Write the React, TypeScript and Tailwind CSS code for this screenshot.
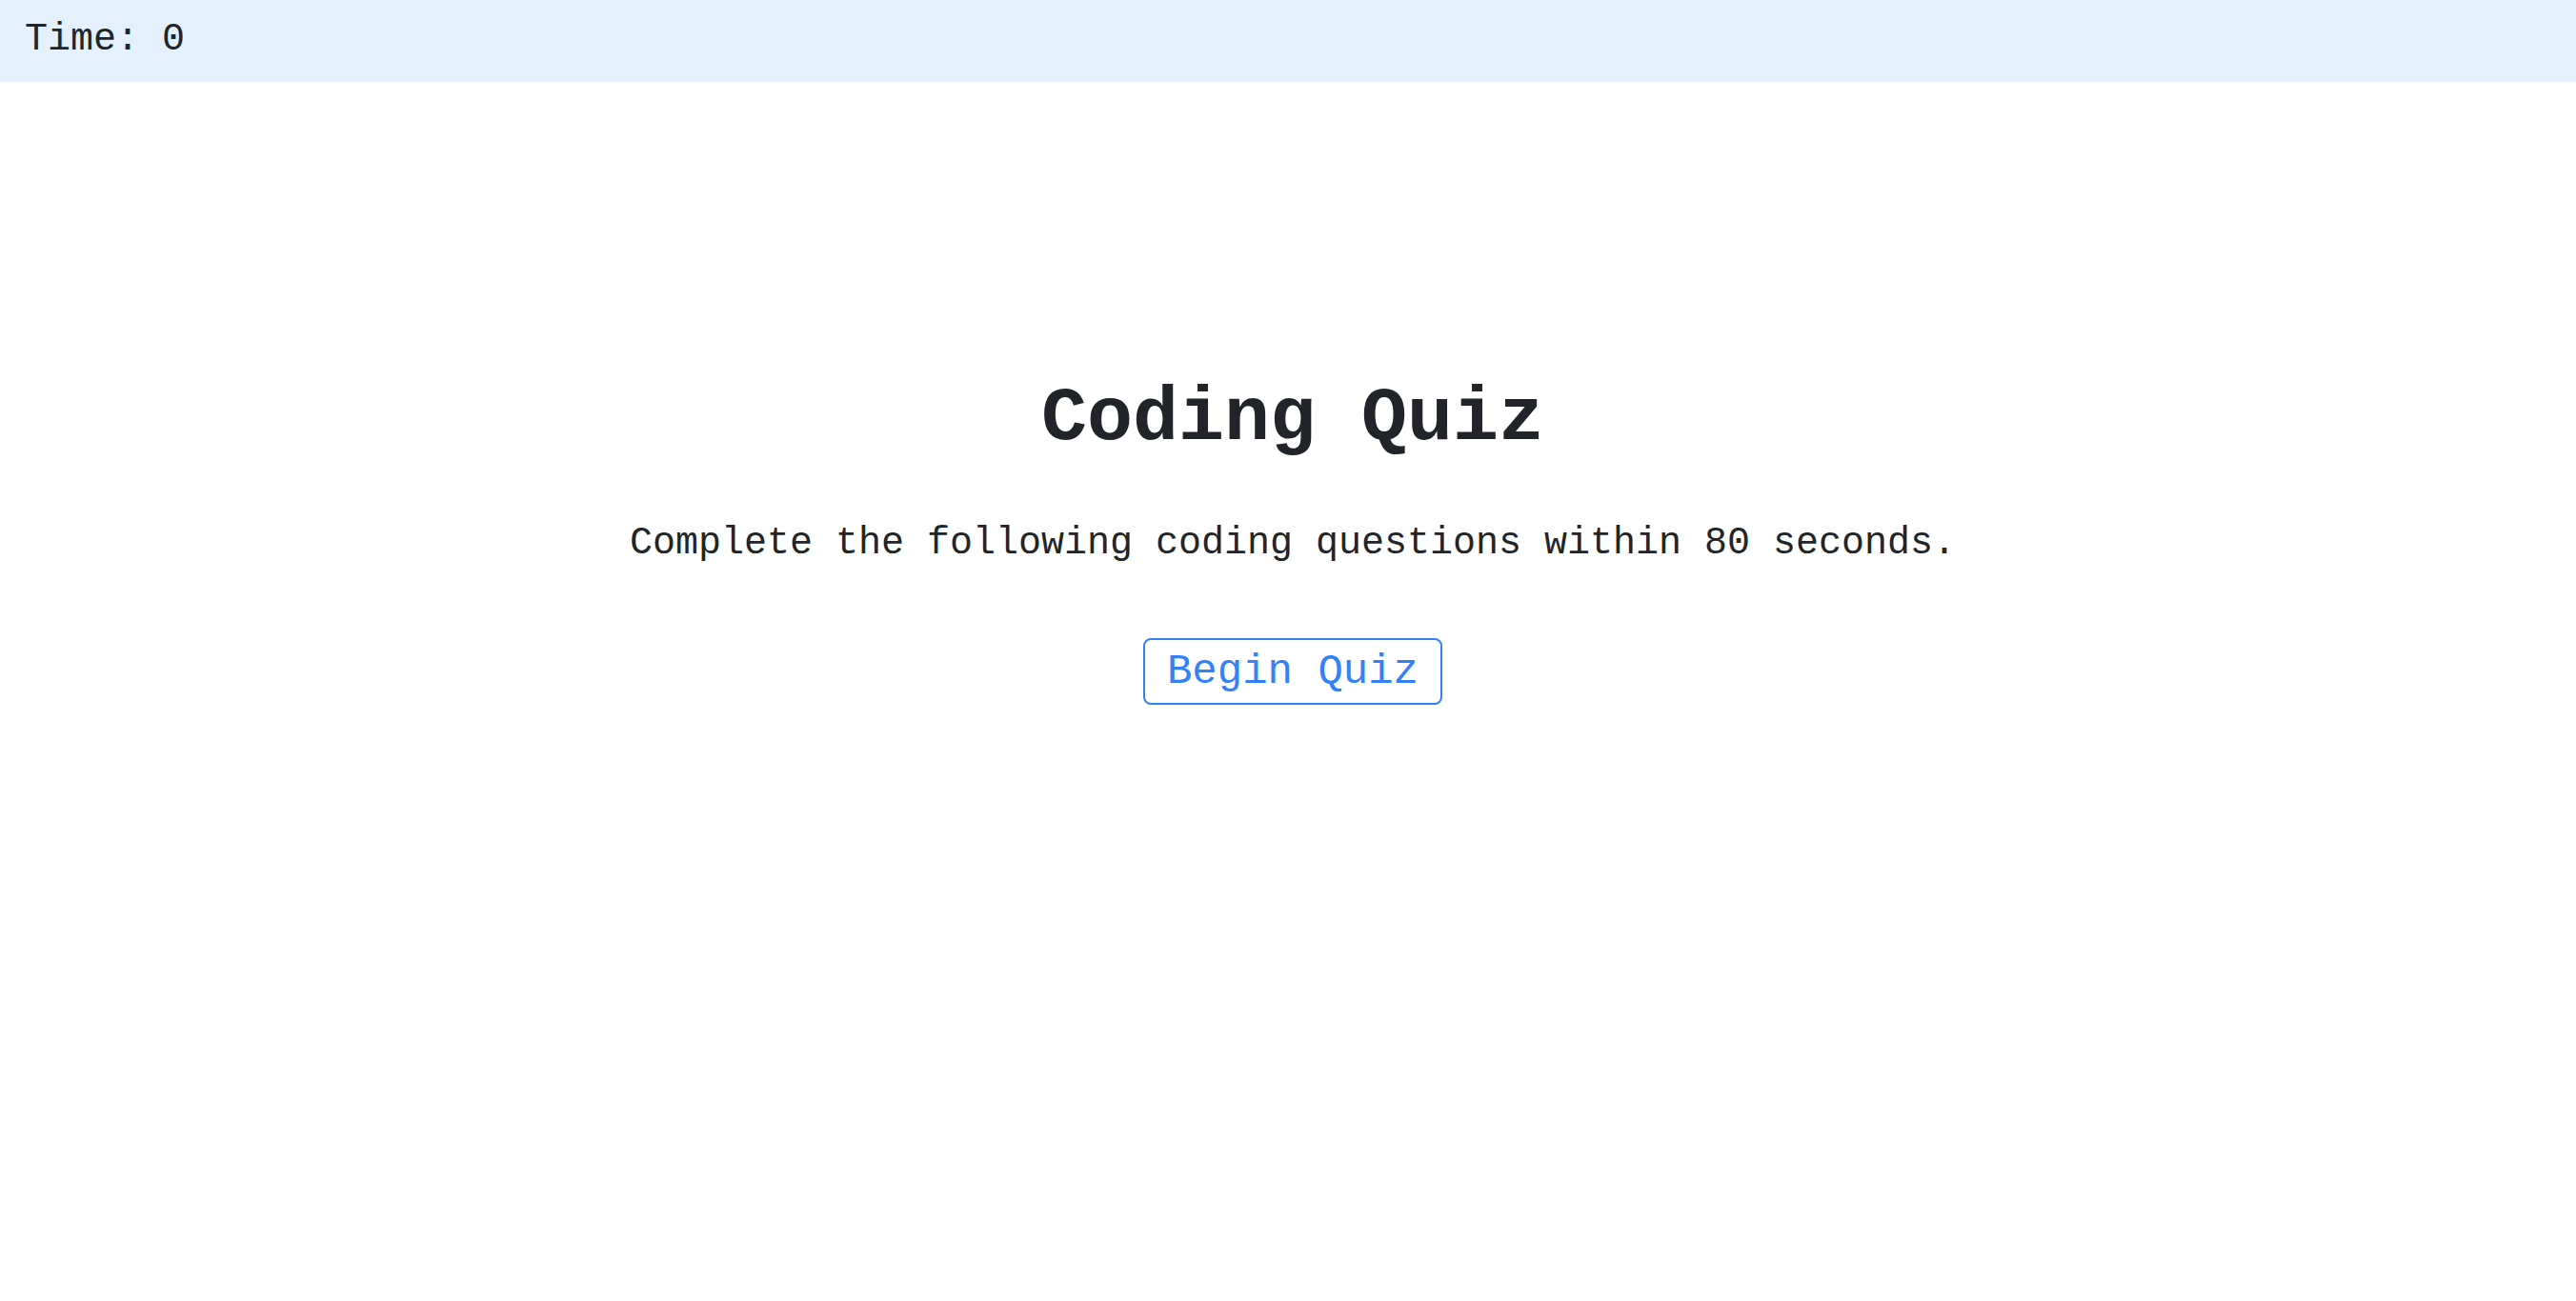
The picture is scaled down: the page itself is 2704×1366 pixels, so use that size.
export default function App() {
  return (
    <div className="min-h-[1366px] bg-white text-[#212529]" style={{ fontFamily: '"Liberation Mono", "Courier New", monospace' }}>
      <header className="h-[86px] bg-[#e4f1fc] pl-[26px] pt-[12px]">
        <p className="text-[40px] leading-[60px]">Time: 0</p>
      </header>
      <main className="flex flex-col items-center pl-[10px] pt-[306px]">
        <h1 className="text-[80px] font-bold leading-[96px]">Coding Quiz</h1>
        <p className="mt-[53px] text-[40px] leading-[60px]">Complete the following coding questions within 80 seconds.</p>
        <button className="mt-[69px] rounded-[8px] border-2 border-[#3381f6] bg-white px-[23px] py-[9px] text-[44px] leading-[48px] text-[#3381f6]">
          Begin Quiz
        </button>
      </main>
    </div>
  );
}
